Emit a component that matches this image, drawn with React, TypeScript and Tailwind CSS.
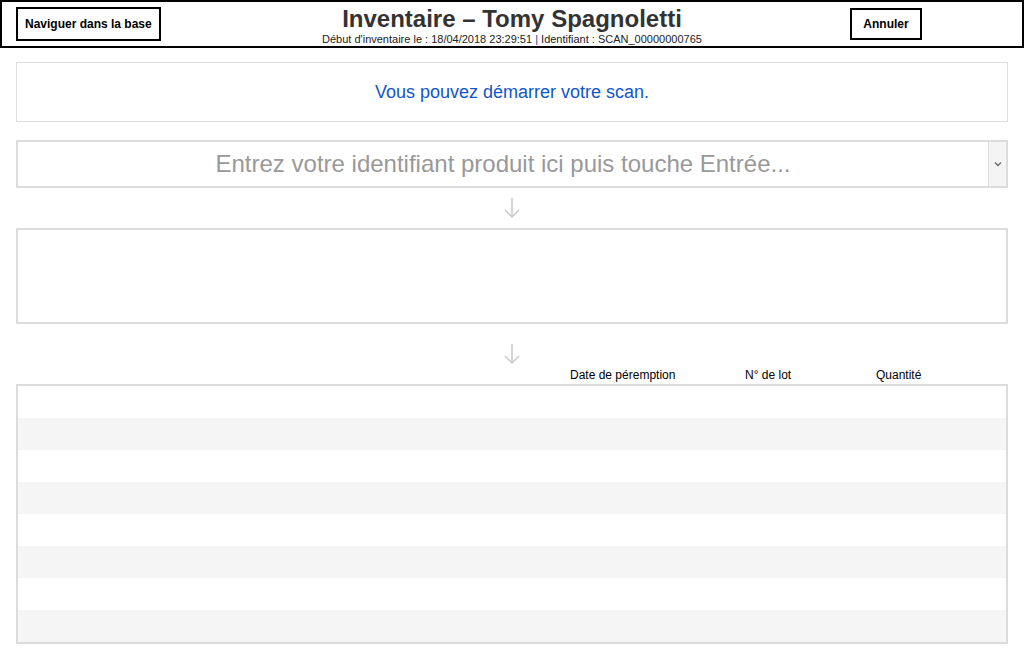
const font = { fontFamily: '"Liberation Sans", Arial, sans-serif' }

function DownArrow() {
  return (
    <svg width="18" height="22" viewBox="0 0 18 22" className="block">
      <line x1="9" y1="1" x2="9" y2="20" stroke="#c8c8c8" strokeWidth="1.5" />
      <polyline points="2,13 9,20 16,13" fill="none" stroke="#c8c8c8" strokeWidth="1.5" />
    </svg>
  )
}

export default function App() {
  const rows = Array.from({ length: 8 })
  return (
    <div className="w-[1024px] h-[660px] bg-white text-black" style={font}>
      {/* Header */}
      <div className="grid grid-cols-[1fr_auto_1fr] items-center h-[48px] border-2 border-black px-[14px]">
        <div className="flex justify-start">
          <button className="h-[34px] px-[7px] border-2 border-black text-[12px] font-bold bg-white">
            Naviguer dans la base
          </button>
        </div>
        <div className="flex flex-col items-center pt-[2px]">
          <div className="text-[24px] leading-[28px] font-bold text-[#333]">Inventaire – Tomy Spagnoletti</div>
          <div className="text-[11px] leading-[12px] text-[#222]">
            Début d'inventaire le : 18/04/2018 23:29:51 <span className="text-[#1a3fa0]">|</span> Identifiant : SCAN_00000000765
          </div>
        </div>
        <div className="flex justify-end pr-[86px]">
          <button className="h-[32px] w-[72px] border-2 border-black text-[12px] font-bold bg-white">
            Annuler
          </button>
        </div>
      </div>

      <div className="px-[16px]">
        {/* Message */}
        <div className="mt-[14px] h-[60px] border border-[#dcdcdc] flex items-center justify-center text-[18px] text-[#1155cc]">
          Vous pouvez démarrer votre scan.
        </div>

        {/* Input */}
        <div className="mt-[18px] h-[48px] border-2 border-[#dcdcdc] flex">
          <div className="flex-1 flex items-center justify-center text-[24px] text-[#999]">
            Entrez votre identifiant produit ici puis touche Entrée...
          </div>
          <div className="w-[18px] border-l border-[#dcdcdc] bg-[#f4f4f4] flex items-center justify-center">
            <svg width="8" height="6" viewBox="0 0 8 6">
              <polyline points="1,1.5 4,4.5 7,1.5" fill="none" stroke="#666" strokeWidth="1.3" />
            </svg>
          </div>
        </div>

        <div className="flex justify-center mt-[9px] h-[22px]">
          <DownArrow />
        </div>

        {/* Product box */}
        <div className="mt-[9px] h-[96px] border-2 border-[#dcdcdc]" />

        <div className="flex justify-center mt-[19px] h-[22px]">
          <DownArrow />
        </div>

        {/* Column headers */}
        <div className="flex text-[12px] leading-[14px] pl-[554px] mt-[3px]">
          <div className="w-[175px]">Date de péremption</div>
          <div className="w-[131px]">N° de lot</div>
          <div>Quantité</div>
        </div>

        {/* Table */}
        <div className="mt-[2px] border-2 border-[#dcdcdc]">
          {rows.map((_, i) => (
            <div key={i} className={i % 2 === 1 ? 'h-[32px] bg-[#f5f5f5]' : 'h-[32px] bg-white'} />
          ))}
        </div>
      </div>
    </div>
  )
}
